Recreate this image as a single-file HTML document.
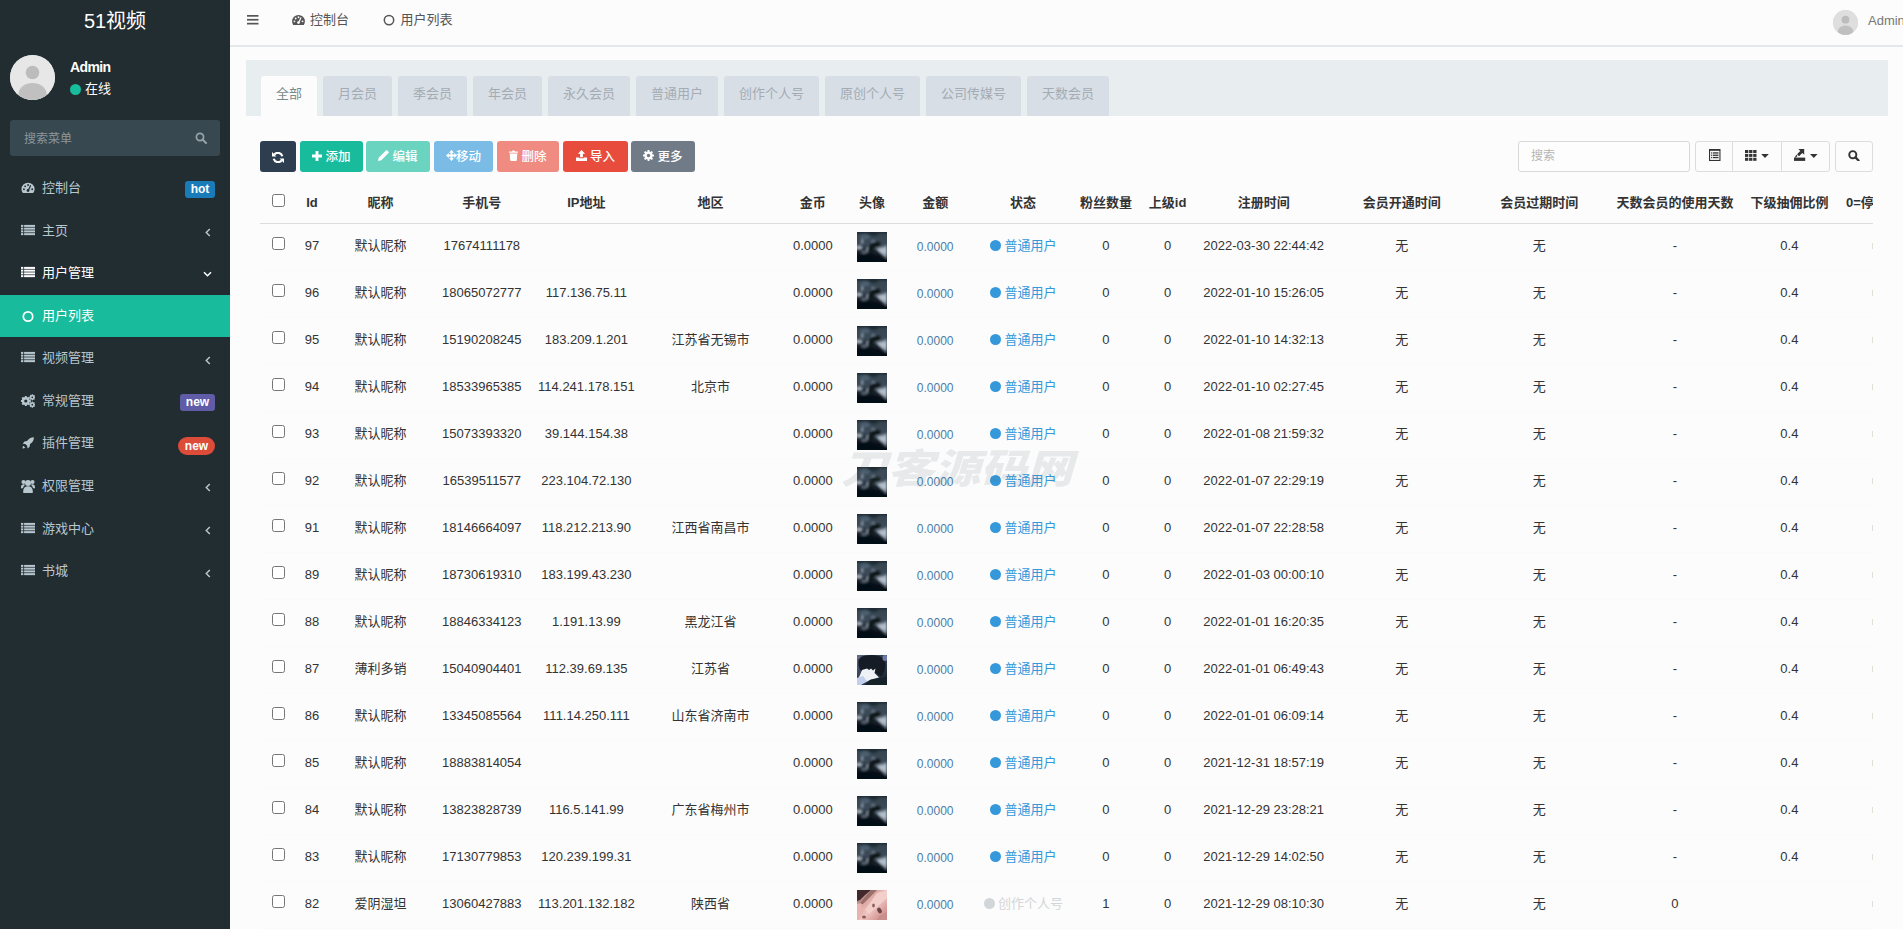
<!DOCTYPE html>
<html lang="zh-CN">
<head>
<meta charset="utf-8">
<title>51视频</title>
<style>
*{box-sizing:border-box}
html,body{margin:0;padding:0}
body{width:1903px;height:929px;overflow:hidden;position:relative;background:#fcfcfc;
 font-family:"Liberation Sans","Noto Sans CJK SC",sans-serif;font-size:13px;line-height:1.42857;color:#333}
a{text-decoration:none;color:inherit}
svg{display:block}
/* ---------- sidebar ---------- */
#sidebar{position:absolute;left:0;top:0;width:230px;height:929px;background:#222d32;color:#b8c7ce}
#logo{position:absolute;left:0;top:1px;width:230px;height:40px;line-height:40px;text-align:center;color:#fff;font-size:20px}
#user .pic{position:absolute;left:10px;top:55px;width:45px;height:45px;border-radius:50%;background:#d9d9d9;overflow:hidden}
#user .name{position:absolute;left:70px;top:57px;font-size:14px;font-weight:bold;color:#fff;line-height:20px;letter-spacing:-.6px}
#user .on{position:absolute;left:70px;top:80px;font-size:13px;color:#fff;line-height:18px;padding-left:15px}
#user .on i{position:absolute;left:0;top:4px;width:11px;height:11px;border-radius:50%;background:#18bc9c}
#sform{position:absolute;left:10px;top:120px;width:210px;height:36px;background:#374850;border-radius:3px;color:#8a979e;font-size:12px;line-height:38px;padding-left:14px}
#sform svg{position:absolute;right:13px;top:12px}
#menu{position:absolute;left:0;top:167px;width:230px;margin:0;padding:0;list-style:none}
#menu li{position:relative;height:42.57px;line-height:42.57px;padding-left:42px;font-size:13px;color:#b8c7ce;white-space:nowrap}
#menu li.open{color:#fff}
#menu li.act{background:#18bc9c;color:#fff}
#menu li .ic{position:absolute;left:21px;top:14px;width:14px;height:14px}
#menu li .arr{position:absolute;right:19px;top:18.5px}
#menu .lab{position:absolute;right:15px;top:14px;height:17px;line-height:17px;border-radius:3px;color:#fff;font-weight:bold;font-size:12px;text-align:center}
/* ---------- header ---------- */
#header{position:absolute;left:230px;top:0;width:1673px;height:45px;background:#fcfcfc;color:#555}
#hline{position:absolute;left:230px;top:45px;width:1673px;height:2px;background:#e3e8eb}
#header .burger{position:absolute;left:17px;top:15px}
#header .tab{position:absolute;top:11px;line-height:18px;font-size:13px;color:#555;white-space:nowrap}
#header .tab svg{position:absolute;top:3px}
#header .upic{position:absolute;left:1603px;top:10px;width:25px;height:25px;border-radius:50%;background:#dcdcdc;overflow:hidden}
#header .uname{position:absolute;left:1638px;top:12px;line-height:18px;color:#777;font-size:13px}
/* ---------- panel ---------- */
#phead{position:absolute;left:246px;top:60px;width:1642px;height:56px;background:#e8edf0}
#phead a{position:absolute;top:16px;height:40px;line-height:35px;text-align:center;background:#d8dee6;color:#a3acb3;font-size:13px;border-radius:3px 3px 0 0}
#phead a.on{background:#fcfcfc;color:#7b8a8b}
/* ---------- toolbar ---------- */
.btn{position:absolute;top:141px;height:31px;border-radius:3px;color:#fff;font-size:12.5px;font-weight:500;line-height:32px;text-align:center;white-space:nowrap}
.btn svg{display:inline-block;vertical-align:.5px;margin-right:3px}
.btn.w{background:#fcfcfc;border:1px solid #ddd;color:#333}
#sin{position:absolute;left:1518px;top:141px;width:172px;height:31px;border:1px solid #d8d8d8;border-radius:3px;background:#fdfdfd;color:#b5b5b5;line-height:29px;padding-left:12px;font-size:12px}
/* ---------- table ---------- */
#twrap{position:absolute;left:260px;top:182px;width:1613px;height:760px;overflow:hidden}
table.tb{border-collapse:separate;border-spacing:0;table-layout:fixed}
.tb th{height:42px;padding:0;border-bottom:1px solid #ddd;font-weight:bold;color:#333;text-align:center;white-space:nowrap;font-size:13px;line-height:40px;overflow:visible}
.tb td{height:47px;padding:0 0 2px;border-bottom:1px solid #fafafa;text-align:center;white-space:nowrap;color:#333;font-size:13px;vertical-align:middle;line-height:18px}
.tb th.last{text-align:left;padding-left:9px}
.cb{display:inline-block;width:13px;height:13px;border:1px solid #767676;border-radius:2.5px;background:#fff;vertical-align:middle;position:relative;top:-3px}
.tb th .cb{top:-3px}
.av{display:inline-block;width:30px;height:30px;vertical-align:middle;position:relative;top:1px;left:0}
.amt{color:#4a7ca8;font-size:12px;position:relative;top:1px}
.st{color:#3498db;white-space:nowrap}
.st .dot{display:inline-block;width:11px;height:11px;border-radius:50%;background:#3498db;margin:0 3px 0 1px;vertical-align:-1px}
.st.gray{color:#d3d6d8}
.st.gray .dot{background:#d3d6d8}
.sl{display:block;width:1px;height:6px;background:#e2dfd6;margin-left:35px}
#wm{position:absolute;left:841px;top:435.5px;width:245px;height:60px;line-height:60px;font-size:40px;font-weight:900;font-style:italic;color:rgba(90,100,110,.125);white-space:nowrap;letter-spacing:0;transform:scaleX(1.16);transform-origin:0 50%;font-family:"Noto Sans CJK SC","Liberation Sans",sans-serif;pointer-events:none}
</style>
</head>
<body>
<svg width="0" height="0" style="position:absolute">
<defs>
<filter id="bl1" x="-20%" y="-20%" width="140%" height="140%"><feGaussianBlur stdDeviation="1.1"/></filter>
<filter id="bl2" x="-20%" y="-20%" width="140%" height="140%"><feGaussianBlur stdDeviation="0.6"/></filter>
<linearGradient id="ga" x1="0" y1="0" x2="0" y2="1"><stop offset="0" stop-color="#1f2b36"/><stop offset=".1" stop-color="#36454f"/><stop offset=".4" stop-color="#3c4a58"/><stop offset=".62" stop-color="#1b2530"/><stop offset=".8" stop-color="#0b111a"/><stop offset="1" stop-color="#050a12"/></linearGradient>
<linearGradient id="gb" x1="0" y1="0" x2="1" y2="1"><stop offset="0" stop-color="#5d6a8c"/><stop offset=".35" stop-color="#38455a"/><stop offset=".7" stop-color="#2a3848"/><stop offset="1" stop-color="#0d141e"/></linearGradient>
<linearGradient id="gc" x1="0" y1="0" x2="1" y2="1"><stop offset="0" stop-color="#6b4a49"/><stop offset=".3" stop-color="#d9a09c"/><stop offset=".55" stop-color="#efc6c2"/><stop offset=".8" stop-color="#d89c99"/><stop offset="1" stop-color="#c48784"/></linearGradient>
<clipPath id="cp"><rect width="30" height="30"/></clipPath>
</defs></svg>
<!-- ================= SIDEBAR ================= -->
<div id="sidebar">
  <div id="logo">51视频</div>
  <div id="user">
    <div class="pic"><svg width="45" height="45" viewBox="0 0 45 45"><rect width="45" height="45" fill="#e7e7e7"/><circle cx="22.5" cy="17.5" r="6.800" fill="#bcbcbc"/><ellipse cx="22.5" cy="39" rx="14" ry="11" fill="#c0c0c0"/></svg></div>
    <div class="name">Admin</div>
    <div class="on"><i></i>在线</div>
  </div>
  <div id="sform">搜索菜单<svg width="12" height="12" viewBox="0 0 12 12"><circle cx="5" cy="5" r="3.6" fill="none" stroke="#97a3a9" stroke-width="1.7"/><path d="M7.6 7.6L11 11" stroke="#97a3a9" stroke-width="2" stroke-linecap="round"/></svg></div>
  <ul id="menu">
    <li><svg class="ic" viewBox="0 0 14 14"><g transform="translate(.5 -.2) scale(.935)"><path d="M7 2A7 7 0 0 0 0 9c0 1.3.4 2.6 1.1 3.6.1.2.3.4.6.4h10.6c.3 0 .5-.2.6-.4C13.600 11.600 14 10.300 14 9a7 7 0 0 0-7-7z" fill="#b8c7ce"/><circle cx="2.6" cy="9" r="1" fill="#222d32"/><circle cx="3.9" cy="5.9" r="1" fill="#222d32"/><circle cx="7" cy="4.500" r="1" fill="#222d32"/><circle cx="11.400" cy="9" r="1" fill="#222d32"/><path d="M9.600 5.200L7.600 9.700" stroke="#222d32" stroke-width="1.300" stroke-linecap="round"/><circle cx="7" cy="10.400" r="1.500" fill="#222d32"/></g></svg>控制台<span class="lab" style="width:30px;background:#1a7bb9">hot</span></li>
    <li><svg class="ic" viewBox="0 0 14 14"><g fill="#b8c7ce"><rect x="0" y="0.9" width="2.300" height="2"/><rect x="3.100" y="0.9" width="10.900" height="2"/><rect x="0" y="3.65" width="2.300" height="2"/><rect x="3.100" y="3.65" width="10.900" height="2"/><rect x="0" y="6.4" width="2.300" height="2"/><rect x="3.100" y="6.4" width="10.900" height="2"/><rect x="0" y="9.15" width="2.300" height="2"/><rect x="3.100" y="9.15" width="10.900" height="2"/></g></svg>主页<svg class="arr" width="6" height="9" viewBox="0 0 6 9"><path d="M4.800 1L1.300 4.500 4.800 8" fill="none" stroke="#b8c7ce" stroke-width="1.500"/></svg></li>
    <li class="open"><svg class="ic" viewBox="0 0 14 14"><g fill="#fff"><rect x="0" y="0.9" width="2.300" height="2"/><rect x="3.100" y="0.9" width="10.900" height="2"/><rect x="0" y="3.65" width="2.300" height="2"/><rect x="3.100" y="3.65" width="10.900" height="2"/><rect x="0" y="6.4" width="2.300" height="2"/><rect x="3.100" y="6.4" width="10.900" height="2"/><rect x="0" y="9.15" width="2.300" height="2"/><rect x="3.100" y="9.15" width="10.900" height="2"/></g></svg>用户管理<svg class="arr" style="right:18px;top:19px" width="9" height="6" viewBox="0 0 9 6"><path d="M1 1.200L4.500 4.700 8 1.200" fill="none" stroke="#fff" stroke-width="1.500"/></svg></li>
    <li class="act"><svg class="ic" viewBox="0 0 14 14"><circle cx="7" cy="7.500" r="4.700" fill="none" stroke="#fff" stroke-width="1.700"/></svg>用户列表</li>
    <li><svg class="ic" viewBox="0 0 14 14"><g fill="#b8c7ce"><rect x="0" y="0.9" width="2.300" height="2"/><rect x="3.100" y="0.9" width="10.900" height="2"/><rect x="0" y="3.65" width="2.300" height="2"/><rect x="3.100" y="3.65" width="10.900" height="2"/><rect x="0" y="6.4" width="2.300" height="2"/><rect x="3.100" y="6.4" width="10.900" height="2"/><rect x="0" y="9.15" width="2.300" height="2"/><rect x="3.100" y="9.15" width="10.900" height="2"/></g></svg>视频管理<svg class="arr" width="6" height="9" viewBox="0 0 6 9"><path d="M4.800 1L1.300 4.500 4.800 8" fill="none" stroke="#b8c7ce" stroke-width="1.500"/></svg></li>
    <li><svg class="ic" viewBox="0 0 14 14"><g fill="#b8c7ce"><circle cx="4.800" cy="7" r="3.900"/><rect x="3.800" y="2" width="2" height="10" rx=".3"/><rect x="-.2" y="6" width="10" height="2" rx=".3"/><rect x="3.800" y="2" width="2" height="10" rx=".3" transform="rotate(45 4.800 7)"/><rect x="3.800" y="2" width="2" height="10" rx=".3" transform="rotate(-45 4.800 7)"/><circle cx="11.300" cy="3.300" r="2.300"/><rect x="10.600" y=".3" width="1.400" height="6"/><rect x="8.300" y="2.600" width="6" height="1.400"/><rect x="10.600" y=".3" width="1.400" height="6" transform="rotate(45 11.300 3.300)"/><rect x="10.600" y=".3" width="1.400" height="6" transform="rotate(-45 11.300 3.300)"/><circle cx="11.300" cy="10.700" r="2.300"/><rect x="10.600" y="7.700" width="1.400" height="6"/><rect x="8.300" y="10" width="6" height="1.400"/><rect x="10.600" y="7.700" width="1.400" height="6" transform="rotate(45 11.300 10.700)"/><rect x="10.600" y="7.700" width="1.400" height="6" transform="rotate(-45 11.300 10.700)"/></g><circle cx="4.800" cy="7" r="1.600" fill="#222d32"/><circle cx="11.300" cy="3.300" r=".9" fill="#222d32"/><circle cx="11.300" cy="10.700" r=".9" fill="#222d32"/></svg>常规管理<span class="lab" style="width:35px;background:#605ca8">new</span></li>
    <li><svg class="ic" viewBox="0 0 14 14"><g transform="translate(1.300 .8) scale(.86)"><path d="M13.500 .5c-3.500 0-6 1.500-8 4.500L2.500 5.500.5 8l3 .3 2.200 2.200.3 3 2.500-2 .5-3c3-2 4.500-4.500 4.500-8z" fill="#b8c7ce"/><path d="M1.200 10.500c-.7.700-.9 2.300-.9 3.200 1 0 2.500-.2 3.200-.9z" fill="#b8c7ce"/></g></svg>插件管理<span class="lab" style="width:37px;height:18px;line-height:18px;border-radius:9px;background:#dd4b39;top:15px">new</span></li>
    <li><svg class="ic" viewBox="0 0 14 14"><g fill="#b8c7ce"><circle cx="7" cy="4" r="3"/><path d="M2.300 13.800c-.6-4.300 1.300-6.600 4.700-6.600s5.300 2.300 4.700 6.600c-.1.300-.3.400-.6.400H2.900c-.3 0-.5-.1-.6-.4z"/><circle cx="2.500" cy="3" r="2.100"/><circle cx="11.500" cy="3" r="2.100"/><path d="M0 9.300c-.2-2.700.7-4.100 2.600-4.100.7 0 1.300.2 1.700.6C3 6.800 2.300 7.900 2 9.300z"/><path d="M14 9.300c.2-2.700-.7-4.100-2.600-4.100-.7 0-1.300.2-1.700.6 1.300 1 2 2.100 2.300 3.500z"/></g></svg>权限管理<svg class="arr" width="6" height="9" viewBox="0 0 6 9"><path d="M4.800 1L1.300 4.500 4.800 8" fill="none" stroke="#b8c7ce" stroke-width="1.500"/></svg></li>
    <li><svg class="ic" viewBox="0 0 14 14"><g fill="#b8c7ce"><rect x="0" y="0.9" width="2.300" height="2"/><rect x="3.100" y="0.9" width="10.900" height="2"/><rect x="0" y="3.65" width="2.300" height="2"/><rect x="3.100" y="3.65" width="10.900" height="2"/><rect x="0" y="6.4" width="2.300" height="2"/><rect x="3.100" y="6.4" width="10.900" height="2"/><rect x="0" y="9.15" width="2.300" height="2"/><rect x="3.100" y="9.15" width="10.900" height="2"/></g></svg>游戏中心<svg class="arr" width="6" height="9" viewBox="0 0 6 9"><path d="M4.800 1L1.300 4.500 4.800 8" fill="none" stroke="#b8c7ce" stroke-width="1.500"/></svg></li>
    <li><svg class="ic" viewBox="0 0 14 14"><g fill="#b8c7ce"><rect x="0" y="0.9" width="2.300" height="2"/><rect x="3.100" y="0.9" width="10.900" height="2"/><rect x="0" y="3.65" width="2.300" height="2"/><rect x="3.100" y="3.65" width="10.900" height="2"/><rect x="0" y="6.4" width="2.300" height="2"/><rect x="3.100" y="6.4" width="10.900" height="2"/><rect x="0" y="9.15" width="2.300" height="2"/><rect x="3.100" y="9.15" width="10.900" height="2"/></g></svg>书城<svg class="arr" width="6" height="9" viewBox="0 0 6 9"><path d="M4.800 1L1.300 4.500 4.800 8" fill="none" stroke="#b8c7ce" stroke-width="1.500"/></svg></li>
  </ul>
</div>

<!-- ================= HEADER ================= -->
<div id="header">
  <svg class="burger" width="12" height="10" viewBox="0 0 12 10"><g fill="#555"><rect x="0" y="0" width="11.500" height="1.700"/><rect x="0" y="3.900" width="11.500" height="1.700"/><rect x="0" y="7.800" width="11.500" height="1.700"/></g></svg>
  <div class="tab" style="left:62px;padding-left:18px"><svg style="left:0" width="13" height="11" viewBox="0 0 14 12"><path d="M7 1A7 7 0 0 0 0 8c0 1.300.4 2.600 1.100 3.600.100.200.300.400.600.400h10.600c.300 0 .500-.200.600-.400C13.600 10.600 14 9.300 14 8a7 7 0 0 0-7-7z" fill="#555"/><circle cx="2.600" cy="8" r="1" fill="#fcfcfc"/><circle cx="3.900" cy="4.900" r="1" fill="#fcfcfc"/><circle cx="7" cy="3.500" r="1" fill="#fcfcfc"/><circle cx="11.400" cy="8" r="1" fill="#fcfcfc"/><path d="M9.600 4.200L7.600 8.700" stroke="#fcfcfc" stroke-width="1.300" stroke-linecap="round"/><circle cx="7" cy="9.400" r="1.500" fill="#fcfcfc"/></svg>控制台</div>
  <div class="tab" style="left:153px;padding-left:17.500px"><svg style="left:0" width="12" height="12" viewBox="0 0 12 12"><circle cx="6" cy="6.100" r="4.700" fill="none" stroke="#555" stroke-width="1.500"/></svg>用户列表</div>
  <div class="upic"><svg width="25" height="25" viewBox="0 0 45 45"><rect width="45" height="45" fill="#dedede"/><circle cx="22.500" cy="17.500" r="7" fill="#bcbcbc"/><ellipse cx="22.500" cy="39" rx="14" ry="11" fill="#c0c0c0"/></svg></div>
  <div class="uname">Admin</div>
</div>
<div id="hline"></div>

<!-- ================= PANEL TABS ================= -->
<div id="phead">
  <a class="on" style="left:15px;width:56px">全部</a>
  <a style="left:77px;width:69px">月会员</a>
  <a style="left:152px;width:69px">季会员</a>
  <a style="left:227px;width:69px">年会员</a>
  <a style="left:302px;width:82px">永久会员</a>
  <a style="left:390px;width:82px">普通用户</a>
  <a style="left:478px;width:95px">创作个人号</a>
  <a style="left:579px;width:95px">原创个人号</a>
  <a style="left:680px;width:95px">公司传媒号</a>
  <a style="left:781px;width:82px">天数会员</a>
</div>

<!-- ================= TOOLBAR ================= -->
<a class="btn" style="left:260px;width:36px;background:#2c3e50"><svg style="margin:0;vertical-align:-1.5px" width="12" height="11" viewBox="0 0 12 11"><path d="M10.300 4.200A4.600 4.600 0 0 0 2.300 2.600" fill="none" stroke="#fff" stroke-width="2.200"/><path d="M1.700 6.800A4.600 4.600 0 0 0 9.700 8.400" fill="none" stroke="#fff" stroke-width="2.200"/><path d="M0 0v4.400h4.400z" fill="#fff"/><path d="M12 11v-4.400h-4.400z" fill="#fff"/></svg></a>
<a class="btn" style="left:300px;width:63px;background:#18bc9c"><svg width="10" height="10" viewBox="0 0 10 10"><path d="M3.550 0h2.900v3.550H10v2.900H6.450V10h-2.900V6.450H0v-2.900h3.550z" fill="#fff"/></svg>添加</a>
<a class="btn" style="left:366px;width:64px;background:#6ad4c0"><svg width="11" height="11" viewBox="0 0 10 10"><path d="M0 10l.6-3L7 .6c.5-.5 1.200-.5 1.700 0l.7.700c.5.500.5 1.200 0 1.700L3 9.400z" fill="#fff"/></svg>编辑</a>
<a class="btn" style="left:434px;width:59px;background:#7bbce7"><svg style="margin-right:-1px" width="11" height="11" viewBox="0 0 11 11"><path d="M5.500 0L8 2.800H6.400V4.600H8.200V3L11 5.500 8.200 8V6.400H6.400V8.200H8L5.500 11 3 8.200H4.600V6.400H2.800V8L0 5.500 2.800 3V4.600H4.600V2.800H3z" fill="#fff"/></svg>移动</a>
<a class="btn" style="left:497px;width:62px;background:#ef8b80"><svg width="9" height="11" viewBox="0 0 9 11"><path d="M0 1.500h3l.4-1h2.200l.4 1h3v1.300H0z M.7 3.600h7.600l-.5 6.400c0 .600-.400 1-1 1H2.200c-.600 0-1-.400-1-1z" fill="#fff"/></svg>删除</a>
<a class="btn" style="left:563px;width:65px;background:#e74c3c"><svg width="11" height="11" viewBox="0 0 11 11"><path d="M5.500 0l3.600 3.700H6.900v3.500H4.100V3.700H1.900z M0 7.500h3.300v.800h4.400v-.800H11V11H0z" fill="#fff"/></svg>导入</a>
<a class="btn" style="left:631px;width:64px;background:#707b87"><svg width="11" height="11" viewBox="0 0 11 11"><g fill="#fff"><circle cx="5.500" cy="5.500" r="4.100"/><rect x="4.500" y="0" width="2" height="11" rx=".4"/><rect x="0" y="4.500" width="11" height="2" rx=".4"/><rect x="4.500" y="0" width="2" height="11" rx=".4" transform="rotate(45 5.500 5.500)"/><rect x="4.500" y="0" width="2" height="11" rx=".4" transform="rotate(-45 5.500 5.500)"/></g><circle cx="5.500" cy="5.500" r="1.700" fill="#707b87"/></svg>更多</a>

<div id="sin">搜索</div>
<a class="btn w" style="left:1695px;width:38px;border-radius:3px 0 0 3px"><svg style="position:absolute;left:13px;top:7px;margin:0" width="11.500" height="12" viewBox="0 0 11.500 12"><rect x=".55" y=".55" width="10.400" height="10.900" fill="none" stroke="#333" stroke-width="1.100"/><rect x=".5" y=".2" width="10.500" height="1.600" fill="#333"/><g fill="#333"><rect x="2.100" y="3.300" width="1.200" height="1.300"/><rect x="4" y="3.300" width="5.500" height="1.300"/><rect x="2.100" y="5.600" width="1.200" height="1.300"/><rect x="4" y="5.600" width="5.500" height="1.300"/><rect x="2.100" y="7.900" width="1.200" height="1.300"/><rect x="4" y="7.900" width="5.500" height="1.300"/></g></svg></a>
<a class="btn w" style="left:1732px;width:50px;border-radius:0"><svg style="position:absolute;left:12px;top:8px;margin:0" width="25" height="12" viewBox="0 0 25 12"><g fill="#333"><rect x="0" y="0" width="3.300" height="3"/><rect x="4.100" y="0" width="3.300" height="3"/><rect x="8.200" y="0" width="3.300" height="3"/><rect x="0" y="3.900" width="3.300" height="3"/><rect x="4.100" y="3.900" width="3.300" height="3"/><rect x="8.200" y="3.900" width="3.300" height="3"/><rect x="0" y="7.800" width="3.300" height="3"/><rect x="4.100" y="7.800" width="3.300" height="3"/><rect x="8.200" y="7.800" width="3.300" height="3"/><path d="M16.200 4h7.600l-3.800 4z"/></g></svg></a>
<a class="btn w" style="left:1781px;width:49px;border-radius:0 3px 3px 0"><svg style="position:absolute;left:12px;top:7px;margin:0" width="25" height="13" viewBox="0 0 25 13"><g fill="#333"><rect x="0" y="8.600" width="11.200" height="3.300"/><path d="M4.400 0H10.200V5.800L8.300 3.900 5 7.200 3 5.200 6.300 1.900z"/><path d="M2.400 5.800l1.100 1.100L1.800 8.600H.6z"/><path d="M16 5h7.600l-3.800 4z"/></g></svg></a>
<a class="btn w" style="left:1835px;width:38px"><svg style="position:absolute;left:12px;top:7.500px;margin:0" width="11.700" height="11.500" viewBox="0 0 13 13"><circle cx="5.300" cy="5.300" r="4" fill="none" stroke="#333" stroke-width="2.200"/><path d="M8.400 8.400L11.800 11.800" stroke="#333" stroke-width="2.600" stroke-linecap="round"/></svg></a>

<!-- ================= TABLE ================= -->
<div id="twrap">
<table class="tb" style="width:1697.0px"><colgroup><col style="width:37.0px"><col style="width:30.0px"><col style="width:107.2px"><col style="width:95.2px"><col style="width:114.0px"><col style="width:134.2px"><col style="width:70.6px"><col style="width:47.6px"><col style="width:78.8px"><col style="width:96.8px"><col style="width:69.2px"><col style="width:54.2px"><col style="width:138.0px"><col style="width:138.0px"><col style="width:137.2px"><col style="width:134.0px"><col style="width:95.0px"><col style="width:120px"></colgroup><thead><tr><th><span class="cb"></span></th><th>Id</th><th>昵称</th><th>手机号</th><th>IP地址</th><th>地区</th><th>金币</th><th>头像</th><th>金额</th><th>状态</th><th>粉丝数量</th><th>上级id</th><th>注册时间</th><th>会员开通时间</th><th>会员过期时间</th><th>天数会员的使用天数</th><th>下级抽佣比例</th><th class="last">0=停用</th></tr></thead><tbody>
<tr><td><span class="cb"></span></td><td>97</td><td>默认昵称</td><td>17674111178</td><td></td><td></td><td>0.0000</td><td><svg class="av" width="30" height="30" viewBox="0 0 30 30"><g clip-path="url(#cp)"><rect width="30" height="30" fill="url(#ga)"/><g filter="url(#bl1)"><ellipse cx="16" cy="1.500" rx="5" ry="2" fill="#1d2a30"/><ellipse cx="8" cy="5" rx="5" ry="2.500" fill="#4b6072"/><ellipse cx="2" cy="15.500" rx="3.500" ry="2.300" fill="#9aa4ad"/><ellipse cx="5.200" cy="9.500" rx="1.300" ry="2.600" fill="#8e9aa5"/><ellipse cx="10.500" cy="17.500" rx="1.600" ry="3" fill="#7d8995"/><ellipse cx="7" cy="20" rx="3" ry="1.500" fill="#5f6b77"/><ellipse cx="16" cy="9" rx="2" ry="1.300" fill="#6d7c8a"/><path d="M13 21C13 15 16 11.500 23 12.500" fill="none" stroke="#0b1219" stroke-width="4.500"/><path d="M18.500 16.500L30 13 30 26.500 26 24 21 19.500z" fill="#8f9ca8"/><path d="M21 17.500L29 16 30 22 25 21z" fill="#b4c0ca"/><path d="M0 23L12 22 20 26 30 27 30 30 0 30z" fill="#060b13"/></g></g></svg></td><td><a class="amt">0.0000</a></td><td><span class="st"><i class="dot"></i>普通用户</span></td><td>0</td><td>0</td><td>2022-03-30 22:44:42</td><td>无</td><td>无</td><td>-</td><td>0.4</td><td class="last"><i class="sl"></i></td></tr>
<tr><td><span class="cb"></span></td><td>96</td><td>默认昵称</td><td>18065072777</td><td>117.136.75.11</td><td></td><td>0.0000</td><td><svg class="av" width="30" height="30" viewBox="0 0 30 30"><g clip-path="url(#cp)"><rect width="30" height="30" fill="url(#ga)"/><g filter="url(#bl1)"><ellipse cx="16" cy="1.500" rx="5" ry="2" fill="#1d2a30"/><ellipse cx="8" cy="5" rx="5" ry="2.500" fill="#4b6072"/><ellipse cx="2" cy="15.500" rx="3.500" ry="2.300" fill="#9aa4ad"/><ellipse cx="5.200" cy="9.500" rx="1.300" ry="2.600" fill="#8e9aa5"/><ellipse cx="10.500" cy="17.500" rx="1.600" ry="3" fill="#7d8995"/><ellipse cx="7" cy="20" rx="3" ry="1.500" fill="#5f6b77"/><ellipse cx="16" cy="9" rx="2" ry="1.300" fill="#6d7c8a"/><path d="M13 21C13 15 16 11.500 23 12.500" fill="none" stroke="#0b1219" stroke-width="4.500"/><path d="M18.500 16.500L30 13 30 26.500 26 24 21 19.500z" fill="#8f9ca8"/><path d="M21 17.500L29 16 30 22 25 21z" fill="#b4c0ca"/><path d="M0 23L12 22 20 26 30 27 30 30 0 30z" fill="#060b13"/></g></g></svg></td><td><a class="amt">0.0000</a></td><td><span class="st"><i class="dot"></i>普通用户</span></td><td>0</td><td>0</td><td>2022-01-10 15:26:05</td><td>无</td><td>无</td><td>-</td><td>0.4</td><td class="last"><i class="sl"></i></td></tr>
<tr><td><span class="cb"></span></td><td>95</td><td>默认昵称</td><td>15190208245</td><td>183.209.1.201</td><td>江苏省无锡市</td><td>0.0000</td><td><svg class="av" width="30" height="30" viewBox="0 0 30 30"><g clip-path="url(#cp)"><rect width="30" height="30" fill="url(#ga)"/><g filter="url(#bl1)"><ellipse cx="16" cy="1.500" rx="5" ry="2" fill="#1d2a30"/><ellipse cx="8" cy="5" rx="5" ry="2.500" fill="#4b6072"/><ellipse cx="2" cy="15.500" rx="3.500" ry="2.300" fill="#9aa4ad"/><ellipse cx="5.200" cy="9.500" rx="1.300" ry="2.600" fill="#8e9aa5"/><ellipse cx="10.500" cy="17.500" rx="1.600" ry="3" fill="#7d8995"/><ellipse cx="7" cy="20" rx="3" ry="1.500" fill="#5f6b77"/><ellipse cx="16" cy="9" rx="2" ry="1.300" fill="#6d7c8a"/><path d="M13 21C13 15 16 11.500 23 12.500" fill="none" stroke="#0b1219" stroke-width="4.500"/><path d="M18.500 16.500L30 13 30 26.500 26 24 21 19.500z" fill="#8f9ca8"/><path d="M21 17.500L29 16 30 22 25 21z" fill="#b4c0ca"/><path d="M0 23L12 22 20 26 30 27 30 30 0 30z" fill="#060b13"/></g></g></svg></td><td><a class="amt">0.0000</a></td><td><span class="st"><i class="dot"></i>普通用户</span></td><td>0</td><td>0</td><td>2022-01-10 14:32:13</td><td>无</td><td>无</td><td>-</td><td>0.4</td><td class="last"><i class="sl"></i></td></tr>
<tr><td><span class="cb"></span></td><td>94</td><td>默认昵称</td><td>18533965385</td><td>114.241.178.151</td><td>北京市</td><td>0.0000</td><td><svg class="av" width="30" height="30" viewBox="0 0 30 30"><g clip-path="url(#cp)"><rect width="30" height="30" fill="url(#ga)"/><g filter="url(#bl1)"><ellipse cx="16" cy="1.500" rx="5" ry="2" fill="#1d2a30"/><ellipse cx="8" cy="5" rx="5" ry="2.500" fill="#4b6072"/><ellipse cx="2" cy="15.500" rx="3.500" ry="2.300" fill="#9aa4ad"/><ellipse cx="5.200" cy="9.500" rx="1.300" ry="2.600" fill="#8e9aa5"/><ellipse cx="10.500" cy="17.500" rx="1.600" ry="3" fill="#7d8995"/><ellipse cx="7" cy="20" rx="3" ry="1.500" fill="#5f6b77"/><ellipse cx="16" cy="9" rx="2" ry="1.300" fill="#6d7c8a"/><path d="M13 21C13 15 16 11.500 23 12.500" fill="none" stroke="#0b1219" stroke-width="4.500"/><path d="M18.500 16.500L30 13 30 26.500 26 24 21 19.500z" fill="#8f9ca8"/><path d="M21 17.500L29 16 30 22 25 21z" fill="#b4c0ca"/><path d="M0 23L12 22 20 26 30 27 30 30 0 30z" fill="#060b13"/></g></g></svg></td><td><a class="amt">0.0000</a></td><td><span class="st"><i class="dot"></i>普通用户</span></td><td>0</td><td>0</td><td>2022-01-10 02:27:45</td><td>无</td><td>无</td><td>-</td><td>0.4</td><td class="last"><i class="sl"></i></td></tr>
<tr><td><span class="cb"></span></td><td>93</td><td>默认昵称</td><td>15073393320</td><td>39.144.154.38</td><td></td><td>0.0000</td><td><svg class="av" width="30" height="30" viewBox="0 0 30 30"><g clip-path="url(#cp)"><rect width="30" height="30" fill="url(#ga)"/><g filter="url(#bl1)"><ellipse cx="16" cy="1.500" rx="5" ry="2" fill="#1d2a30"/><ellipse cx="8" cy="5" rx="5" ry="2.500" fill="#4b6072"/><ellipse cx="2" cy="15.500" rx="3.500" ry="2.300" fill="#9aa4ad"/><ellipse cx="5.200" cy="9.500" rx="1.300" ry="2.600" fill="#8e9aa5"/><ellipse cx="10.500" cy="17.500" rx="1.600" ry="3" fill="#7d8995"/><ellipse cx="7" cy="20" rx="3" ry="1.500" fill="#5f6b77"/><ellipse cx="16" cy="9" rx="2" ry="1.300" fill="#6d7c8a"/><path d="M13 21C13 15 16 11.500 23 12.500" fill="none" stroke="#0b1219" stroke-width="4.500"/><path d="M18.500 16.500L30 13 30 26.500 26 24 21 19.500z" fill="#8f9ca8"/><path d="M21 17.500L29 16 30 22 25 21z" fill="#b4c0ca"/><path d="M0 23L12 22 20 26 30 27 30 30 0 30z" fill="#060b13"/></g></g></svg></td><td><a class="amt">0.0000</a></td><td><span class="st"><i class="dot"></i>普通用户</span></td><td>0</td><td>0</td><td>2022-01-08 21:59:32</td><td>无</td><td>无</td><td>-</td><td>0.4</td><td class="last"><i class="sl"></i></td></tr>
<tr><td><span class="cb"></span></td><td>92</td><td>默认昵称</td><td>16539511577</td><td>223.104.72.130</td><td></td><td>0.0000</td><td><svg class="av" width="30" height="30" viewBox="0 0 30 30"><g clip-path="url(#cp)"><rect width="30" height="30" fill="url(#ga)"/><g filter="url(#bl1)"><ellipse cx="16" cy="1.500" rx="5" ry="2" fill="#1d2a30"/><ellipse cx="8" cy="5" rx="5" ry="2.500" fill="#4b6072"/><ellipse cx="2" cy="15.500" rx="3.500" ry="2.300" fill="#9aa4ad"/><ellipse cx="5.200" cy="9.500" rx="1.300" ry="2.600" fill="#8e9aa5"/><ellipse cx="10.500" cy="17.500" rx="1.600" ry="3" fill="#7d8995"/><ellipse cx="7" cy="20" rx="3" ry="1.500" fill="#5f6b77"/><ellipse cx="16" cy="9" rx="2" ry="1.300" fill="#6d7c8a"/><path d="M13 21C13 15 16 11.500 23 12.500" fill="none" stroke="#0b1219" stroke-width="4.500"/><path d="M18.500 16.500L30 13 30 26.500 26 24 21 19.500z" fill="#8f9ca8"/><path d="M21 17.500L29 16 30 22 25 21z" fill="#b4c0ca"/><path d="M0 23L12 22 20 26 30 27 30 30 0 30z" fill="#060b13"/></g></g></svg></td><td><a class="amt">0.0000</a></td><td><span class="st"><i class="dot"></i>普通用户</span></td><td>0</td><td>0</td><td>2022-01-07 22:29:19</td><td>无</td><td>无</td><td>-</td><td>0.4</td><td class="last"><i class="sl"></i></td></tr>
<tr><td><span class="cb"></span></td><td>91</td><td>默认昵称</td><td>18146664097</td><td>118.212.213.90</td><td>江西省南昌市</td><td>0.0000</td><td><svg class="av" width="30" height="30" viewBox="0 0 30 30"><g clip-path="url(#cp)"><rect width="30" height="30" fill="url(#ga)"/><g filter="url(#bl1)"><ellipse cx="16" cy="1.500" rx="5" ry="2" fill="#1d2a30"/><ellipse cx="8" cy="5" rx="5" ry="2.500" fill="#4b6072"/><ellipse cx="2" cy="15.500" rx="3.500" ry="2.300" fill="#9aa4ad"/><ellipse cx="5.200" cy="9.500" rx="1.300" ry="2.600" fill="#8e9aa5"/><ellipse cx="10.500" cy="17.500" rx="1.600" ry="3" fill="#7d8995"/><ellipse cx="7" cy="20" rx="3" ry="1.500" fill="#5f6b77"/><ellipse cx="16" cy="9" rx="2" ry="1.300" fill="#6d7c8a"/><path d="M13 21C13 15 16 11.500 23 12.500" fill="none" stroke="#0b1219" stroke-width="4.500"/><path d="M18.500 16.500L30 13 30 26.500 26 24 21 19.500z" fill="#8f9ca8"/><path d="M21 17.500L29 16 30 22 25 21z" fill="#b4c0ca"/><path d="M0 23L12 22 20 26 30 27 30 30 0 30z" fill="#060b13"/></g></g></svg></td><td><a class="amt">0.0000</a></td><td><span class="st"><i class="dot"></i>普通用户</span></td><td>0</td><td>0</td><td>2022-01-07 22:28:58</td><td>无</td><td>无</td><td>-</td><td>0.4</td><td class="last"><i class="sl"></i></td></tr>
<tr><td><span class="cb"></span></td><td>89</td><td>默认昵称</td><td>18730619310</td><td>183.199.43.230</td><td></td><td>0.0000</td><td><svg class="av" width="30" height="30" viewBox="0 0 30 30"><g clip-path="url(#cp)"><rect width="30" height="30" fill="url(#ga)"/><g filter="url(#bl1)"><ellipse cx="16" cy="1.500" rx="5" ry="2" fill="#1d2a30"/><ellipse cx="8" cy="5" rx="5" ry="2.500" fill="#4b6072"/><ellipse cx="2" cy="15.500" rx="3.500" ry="2.300" fill="#9aa4ad"/><ellipse cx="5.200" cy="9.500" rx="1.300" ry="2.600" fill="#8e9aa5"/><ellipse cx="10.500" cy="17.500" rx="1.600" ry="3" fill="#7d8995"/><ellipse cx="7" cy="20" rx="3" ry="1.500" fill="#5f6b77"/><ellipse cx="16" cy="9" rx="2" ry="1.300" fill="#6d7c8a"/><path d="M13 21C13 15 16 11.500 23 12.500" fill="none" stroke="#0b1219" stroke-width="4.500"/><path d="M18.500 16.500L30 13 30 26.500 26 24 21 19.500z" fill="#8f9ca8"/><path d="M21 17.500L29 16 30 22 25 21z" fill="#b4c0ca"/><path d="M0 23L12 22 20 26 30 27 30 30 0 30z" fill="#060b13"/></g></g></svg></td><td><a class="amt">0.0000</a></td><td><span class="st"><i class="dot"></i>普通用户</span></td><td>0</td><td>0</td><td>2022-01-03 00:00:10</td><td>无</td><td>无</td><td>-</td><td>0.4</td><td class="last"><i class="sl"></i></td></tr>
<tr><td><span class="cb"></span></td><td>88</td><td>默认昵称</td><td>18846334123</td><td>1.191.13.99</td><td>黑龙江省</td><td>0.0000</td><td><svg class="av" width="30" height="30" viewBox="0 0 30 30"><g clip-path="url(#cp)"><rect width="30" height="30" fill="url(#ga)"/><g filter="url(#bl1)"><ellipse cx="16" cy="1.500" rx="5" ry="2" fill="#1d2a30"/><ellipse cx="8" cy="5" rx="5" ry="2.500" fill="#4b6072"/><ellipse cx="2" cy="15.500" rx="3.500" ry="2.300" fill="#9aa4ad"/><ellipse cx="5.200" cy="9.500" rx="1.300" ry="2.600" fill="#8e9aa5"/><ellipse cx="10.500" cy="17.500" rx="1.600" ry="3" fill="#7d8995"/><ellipse cx="7" cy="20" rx="3" ry="1.500" fill="#5f6b77"/><ellipse cx="16" cy="9" rx="2" ry="1.300" fill="#6d7c8a"/><path d="M13 21C13 15 16 11.500 23 12.500" fill="none" stroke="#0b1219" stroke-width="4.500"/><path d="M18.500 16.500L30 13 30 26.500 26 24 21 19.500z" fill="#8f9ca8"/><path d="M21 17.500L29 16 30 22 25 21z" fill="#b4c0ca"/><path d="M0 23L12 22 20 26 30 27 30 30 0 30z" fill="#060b13"/></g></g></svg></td><td><a class="amt">0.0000</a></td><td><span class="st"><i class="dot"></i>普通用户</span></td><td>0</td><td>0</td><td>2022-01-01 16:20:35</td><td>无</td><td>无</td><td>-</td><td>0.4</td><td class="last"><i class="sl"></i></td></tr>
<tr><td><span class="cb"></span></td><td>87</td><td>薄利多销</td><td>15040904401</td><td>112.39.69.135</td><td>江苏省</td><td>0.0000</td><td><svg class="av" width="30" height="30" viewBox="0 0 30 30"><g clip-path="url(#cp)"><rect width="30" height="30" fill="url(#gb)"/><g filter="url(#bl2)"><path d="M2 3C8-1 22-1 27 4 30 10 28 18 24 22L17 17 4 16C1 12 1 7 2 3z" fill="#151e28"/><path d="M5 15L10 13.500 12 15 14 13.500 16 15.500 18.500 13.500 17.500 18 22 22.500 14 24.500 9 27 3 30 0 30 1 24 3 20z" fill="#eef1f6"/><path d="M0 23L6 21 10 26 4 30 0 30z" fill="#c3cfec"/><path d="M13 25L22 23 30 22 30 30 8 30z" fill="#16212b"/><ellipse cx="28" cy="3" rx="2.500" ry="3" fill="#6f79a8"/><ellipse cx="1.500" cy="2" rx="2" ry="2" fill="#6a6a86"/></g></g></svg></td><td><a class="amt">0.0000</a></td><td><span class="st"><i class="dot"></i>普通用户</span></td><td>0</td><td>0</td><td>2022-01-01 06:49:43</td><td>无</td><td>无</td><td>-</td><td>0.4</td><td class="last"><i class="sl"></i></td></tr>
<tr><td><span class="cb"></span></td><td>86</td><td>默认昵称</td><td>13345085564</td><td>111.14.250.111</td><td>山东省济南市</td><td>0.0000</td><td><svg class="av" width="30" height="30" viewBox="0 0 30 30"><g clip-path="url(#cp)"><rect width="30" height="30" fill="url(#ga)"/><g filter="url(#bl1)"><ellipse cx="16" cy="1.500" rx="5" ry="2" fill="#1d2a30"/><ellipse cx="8" cy="5" rx="5" ry="2.500" fill="#4b6072"/><ellipse cx="2" cy="15.500" rx="3.500" ry="2.300" fill="#9aa4ad"/><ellipse cx="5.200" cy="9.500" rx="1.300" ry="2.600" fill="#8e9aa5"/><ellipse cx="10.500" cy="17.500" rx="1.600" ry="3" fill="#7d8995"/><ellipse cx="7" cy="20" rx="3" ry="1.500" fill="#5f6b77"/><ellipse cx="16" cy="9" rx="2" ry="1.300" fill="#6d7c8a"/><path d="M13 21C13 15 16 11.500 23 12.500" fill="none" stroke="#0b1219" stroke-width="4.500"/><path d="M18.500 16.500L30 13 30 26.500 26 24 21 19.500z" fill="#8f9ca8"/><path d="M21 17.500L29 16 30 22 25 21z" fill="#b4c0ca"/><path d="M0 23L12 22 20 26 30 27 30 30 0 30z" fill="#060b13"/></g></g></svg></td><td><a class="amt">0.0000</a></td><td><span class="st"><i class="dot"></i>普通用户</span></td><td>0</td><td>0</td><td>2022-01-01 06:09:14</td><td>无</td><td>无</td><td>-</td><td>0.4</td><td class="last"><i class="sl"></i></td></tr>
<tr><td><span class="cb"></span></td><td>85</td><td>默认昵称</td><td>18883814054</td><td></td><td></td><td>0.0000</td><td><svg class="av" width="30" height="30" viewBox="0 0 30 30"><g clip-path="url(#cp)"><rect width="30" height="30" fill="url(#ga)"/><g filter="url(#bl1)"><ellipse cx="16" cy="1.500" rx="5" ry="2" fill="#1d2a30"/><ellipse cx="8" cy="5" rx="5" ry="2.500" fill="#4b6072"/><ellipse cx="2" cy="15.500" rx="3.500" ry="2.300" fill="#9aa4ad"/><ellipse cx="5.200" cy="9.500" rx="1.300" ry="2.600" fill="#8e9aa5"/><ellipse cx="10.500" cy="17.500" rx="1.600" ry="3" fill="#7d8995"/><ellipse cx="7" cy="20" rx="3" ry="1.500" fill="#5f6b77"/><ellipse cx="16" cy="9" rx="2" ry="1.300" fill="#6d7c8a"/><path d="M13 21C13 15 16 11.500 23 12.500" fill="none" stroke="#0b1219" stroke-width="4.500"/><path d="M18.500 16.500L30 13 30 26.500 26 24 21 19.500z" fill="#8f9ca8"/><path d="M21 17.500L29 16 30 22 25 21z" fill="#b4c0ca"/><path d="M0 23L12 22 20 26 30 27 30 30 0 30z" fill="#060b13"/></g></g></svg></td><td><a class="amt">0.0000</a></td><td><span class="st"><i class="dot"></i>普通用户</span></td><td>0</td><td>0</td><td>2021-12-31 18:57:19</td><td>无</td><td>无</td><td>-</td><td>0.4</td><td class="last"><i class="sl"></i></td></tr>
<tr><td><span class="cb"></span></td><td>84</td><td>默认昵称</td><td>13823828739</td><td>116.5.141.99</td><td>广东省梅州市</td><td>0.0000</td><td><svg class="av" width="30" height="30" viewBox="0 0 30 30"><g clip-path="url(#cp)"><rect width="30" height="30" fill="url(#ga)"/><g filter="url(#bl1)"><ellipse cx="16" cy="1.500" rx="5" ry="2" fill="#1d2a30"/><ellipse cx="8" cy="5" rx="5" ry="2.500" fill="#4b6072"/><ellipse cx="2" cy="15.500" rx="3.500" ry="2.300" fill="#9aa4ad"/><ellipse cx="5.200" cy="9.500" rx="1.300" ry="2.600" fill="#8e9aa5"/><ellipse cx="10.500" cy="17.500" rx="1.600" ry="3" fill="#7d8995"/><ellipse cx="7" cy="20" rx="3" ry="1.500" fill="#5f6b77"/><ellipse cx="16" cy="9" rx="2" ry="1.300" fill="#6d7c8a"/><path d="M13 21C13 15 16 11.500 23 12.500" fill="none" stroke="#0b1219" stroke-width="4.500"/><path d="M18.500 16.500L30 13 30 26.500 26 24 21 19.500z" fill="#8f9ca8"/><path d="M21 17.500L29 16 30 22 25 21z" fill="#b4c0ca"/><path d="M0 23L12 22 20 26 30 27 30 30 0 30z" fill="#060b13"/></g></g></svg></td><td><a class="amt">0.0000</a></td><td><span class="st"><i class="dot"></i>普通用户</span></td><td>0</td><td>0</td><td>2021-12-29 23:28:21</td><td>无</td><td>无</td><td>-</td><td>0.4</td><td class="last"><i class="sl"></i></td></tr>
<tr><td><span class="cb"></span></td><td>83</td><td>默认昵称</td><td>17130779853</td><td>120.239.199.31</td><td></td><td>0.0000</td><td><svg class="av" width="30" height="30" viewBox="0 0 30 30"><g clip-path="url(#cp)"><rect width="30" height="30" fill="url(#ga)"/><g filter="url(#bl1)"><ellipse cx="16" cy="1.500" rx="5" ry="2" fill="#1d2a30"/><ellipse cx="8" cy="5" rx="5" ry="2.500" fill="#4b6072"/><ellipse cx="2" cy="15.500" rx="3.500" ry="2.300" fill="#9aa4ad"/><ellipse cx="5.200" cy="9.500" rx="1.300" ry="2.600" fill="#8e9aa5"/><ellipse cx="10.500" cy="17.500" rx="1.600" ry="3" fill="#7d8995"/><ellipse cx="7" cy="20" rx="3" ry="1.500" fill="#5f6b77"/><ellipse cx="16" cy="9" rx="2" ry="1.300" fill="#6d7c8a"/><path d="M13 21C13 15 16 11.500 23 12.500" fill="none" stroke="#0b1219" stroke-width="4.500"/><path d="M18.500 16.500L30 13 30 26.500 26 24 21 19.500z" fill="#8f9ca8"/><path d="M21 17.500L29 16 30 22 25 21z" fill="#b4c0ca"/><path d="M0 23L12 22 20 26 30 27 30 30 0 30z" fill="#060b13"/></g></g></svg></td><td><a class="amt">0.0000</a></td><td><span class="st"><i class="dot"></i>普通用户</span></td><td>0</td><td>0</td><td>2021-12-29 14:02:50</td><td>无</td><td>无</td><td>-</td><td>0.4</td><td class="last"><i class="sl"></i></td></tr>
<tr><td><span class="cb"></span></td><td>82</td><td>爱阴湿坦</td><td>13060427883</td><td>113.201.132.182</td><td>陕西省</td><td>0.0000</td><td><svg class="av" width="30" height="30" viewBox="0 0 30 30"><g clip-path="url(#cp)"><rect width="30" height="30" fill="url(#gc)"/><g filter="url(#bl2)"><path d="M0 0L14 0 8 5 3 10 0 11z" fill="#3f2c2d"/><path d="M14 0L20 0 6 14 2 14z" fill="#9a6f6b"/><path d="M20 3L30 0 30 8 12 24 8 20z" fill="#f2cfcb"/><path d="M0 14L4 13 6 22 2 30 0 30z" fill="#e8b4b0"/><ellipse cx="22.500" cy="20.500" rx="2" ry="3" fill="#6b4545" transform="rotate(-30 22.500 20.500)"/><ellipse cx="16.500" cy="15.500" rx="1.300" ry="2" fill="#8a5c5a"/><ellipse cx="7" cy="27" rx="2" ry="1.500" fill="#8c5a58"/><path d="M22 26L30 22 30 30 20 30z" fill="#c98f8c"/></g></g></svg></td><td><a class="amt">0.0000</a></td><td><span class="st gray"><i class="dot"></i>创作个人号</span></td><td>1</td><td>0</td><td>2021-12-29 08:10:30</td><td>无</td><td>无</td><td>0</td><td></td><td class="last"><i class="sl"></i></td></tr>
</tbody></table>
</div>
<div id="wm">刀客源码网</div>
</body>
</html>
